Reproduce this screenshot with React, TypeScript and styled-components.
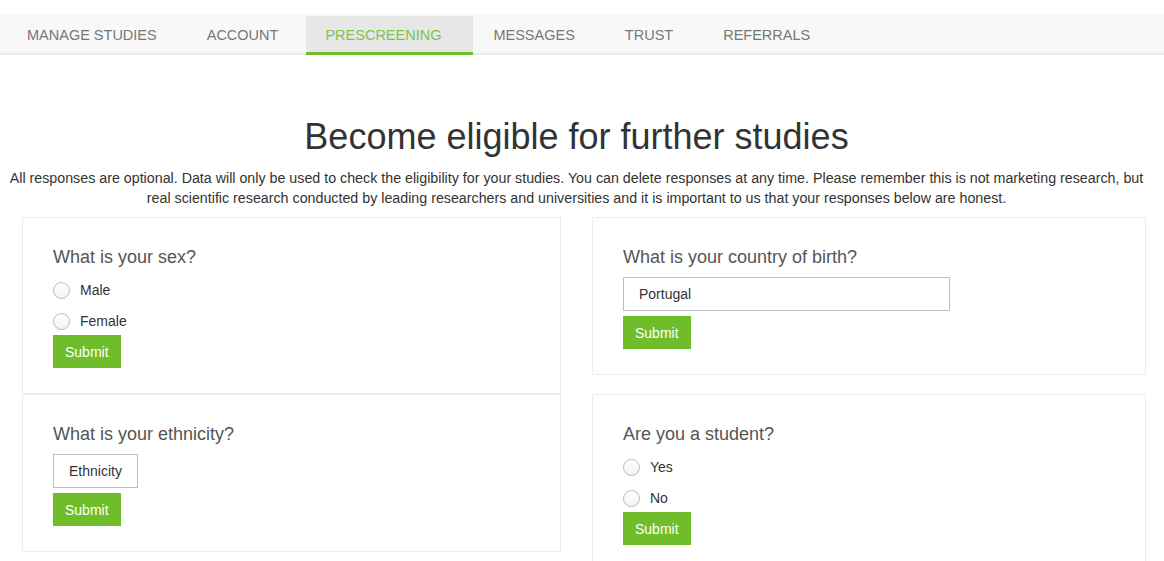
import React, { useState } from "react";
import styled, { createGlobalStyle } from "styled-components";

const GlobalStyle = createGlobalStyle`
  html, body {
    margin: 0;
    padding: 0;
    background: #fff;
  }
  body {
    font-family: "Liberation Sans", Arial, Helvetica, sans-serif;
    color: #333;
    font-size: 14px;
  }
  * {
    box-sizing: border-box;
  }
`;

const Page = styled.div`
  padding-top: 14px;
  width: 1164px;
`;

const Nav = styled.nav`
  display: flex;
  align-items: flex-start;
  height: 41px;
  padding: 2px 0 0 7px;
  background: #f8f8f8;
  border-bottom: 2px solid #ebebeb;
`;

const Tab = styled.a<{ $active?: boolean }>`
  display: flex;
  align-items: center;
  height: 39px;
  margin-bottom: -2px;
  padding: ${(p) => (p.$active ? "1px 32px 0 19px" : "1px 20px 0")};
  margin-right: ${(p) => (p.$active ? "0" : "10px")};
  margin-left: ${(p) => (p.$active ? "-2px" : "0")};
  border-bottom: 3px solid ${(p) => (p.$active ? "#72bf2c" : "transparent")};
  background: ${(p) => (p.$active ? "#e7e7e7" : "transparent")};
  color: ${(p) => (p.$active ? "#80c34a" : "#777")};
  font-size: 14.5px;
  text-transform: uppercase;
  text-decoration: none;
  cursor: pointer;
`;

const Intro = styled.header`
  padding: 62px 11px 0 0;
  text-align: center;
`;

const Heading = styled.h1`
  margin: 0 0 11px;
  font-size: 36px;
  font-weight: 400;
  line-height: 40px;
  color: #333;
`;

const Lead = styled.p`
  margin: 0;
  font-size: 14.25px;
  line-height: 20px;
  color: #333;
`;

const Columns = styled.div`
  display: grid;
  grid-template-columns: 539px 554px;
  column-gap: 31px;
  align-items: start;
  padding: 9px 0 0 22px;
`;

const Column = styled.div<{ $gap: number }>`
  display: flex;
  flex-direction: column;
  gap: ${(p) => p.$gap}px;
`;

const Card = styled.section<{ $stacked?: boolean }>`
  border: 1px solid #ececec;
  padding: 28px 30px 25px;
  margin-top: ${(p) => (p.$stacked ? "-1px" : "0")};
  border-top-width: ${(p) => (p.$stacked ? "2px" : "1px")};
`;

const Question = styled.h3`
  margin: 0;
  font-size: 18px;
  font-weight: 400;
  line-height: 22px;
  color: #555;
`;

const Options = styled.div`
  display: flex;
  flex-direction: column;
  gap: 3px;
  margin: 8px 0 0;
`;

const Option = styled.label`
  display: flex;
  align-items: center;
  height: 28px;
  gap: 10px;
  font-size: 14px;
  color: #333;
  cursor: pointer;
`;

const Radio = styled.span<{ $checked?: boolean }>`
  width: 17px;
  height: 17px;
  border-radius: 50%;
  border: 1px solid #b9b9b9;
  background: linear-gradient(#fff, #f3f3f3);
  display: flex;
  align-items: center;
  justify-content: center;
  &::after {
    content: "";
    width: 7px;
    height: 7px;
    border-radius: 50%;
    background: ${(p) => (p.$checked ? "#72bf2c" : "transparent")};
  }
`;

const Field = styled.div<{ $width?: number }>`
  margin-top: 9px;
  display: flex;
  align-items: center;
  height: 34px;
  width: ${(p) => (p.$width ? `${p.$width}px` : "auto")};
  padding: 0 15px;
  border: 1px solid #bdbdbd;
  font-size: 14px;
  color: #333;
`;

const FieldRow = styled.div`
  display: flex;
`;

const Submit = styled.button<{ $offset?: number }>`
  display: block;
  margin-top: ${(p) => p.$offset ?? 0}px;
  height: 33px;
  padding: 0 12px;
  border: none;
  background: #70bd2b;
  color: #fff;
  font-family: inherit;
  font-size: 14px;
  cursor: pointer;
`;

const RadioQuestion: React.FC<{ title: string; options: string[] }> = ({ title, options }) => {
  const [value, setValue] = useState<string | null>(null);
  return (
    <>
      <Question>{title}</Question>
      <Options>
        {options.map((o) => (
          <Option key={o} onClick={() => setValue(o)}>
            <Radio $checked={value === o} />
            {o}
          </Option>
        ))}
      </Options>
      <Submit>Submit</Submit>
    </>
  );
};

const tabs = ["Manage Studies", "Account", "Prescreening", "Messages", "Trust", "Referrals"];

export default function App() {
  return (
    <Page>
      <GlobalStyle />
      <Nav>
        {tabs.map((t) => (
          <Tab key={t} $active={t === "Prescreening"}>
            {t}
          </Tab>
        ))}
      </Nav>
      <Intro>
        <Heading>Become eligible for further studies</Heading>
        <Lead>
          All responses are optional. Data will only be used to check the eligibility for your studies. You can
          delete responses at any time. Please remember this is not marketing research, but real scientific research
          conducted by leading researchers and universities and it is important to us that your responses below are
          honest.
        </Lead>
      </Intro>
      <Columns>
        <Column $gap={0}>
          <Card>
            <RadioQuestion title="What is your sex?" options={["Male", "Female"]} />
          </Card>
          <Card $stacked>
            <Question>What is your ethnicity?</Question>
            <FieldRow>
              <Field>Ethnicity</Field>
            </FieldRow>
            <Submit $offset={5}>Submit</Submit>
          </Card>
        </Column>
        <Column $gap={19}>
          <Card>
            <Question>What is your country of birth?</Question>
            <FieldRow>
              <Field $width={327}>Portugal</Field>
            </FieldRow>
            <Submit $offset={5}>Submit</Submit>
          </Card>
          <Card>
            <RadioQuestion title="Are you a student?" options={["Yes", "No"]} />
          </Card>
        </Column>
      </Columns>
    </Page>
  );
}
